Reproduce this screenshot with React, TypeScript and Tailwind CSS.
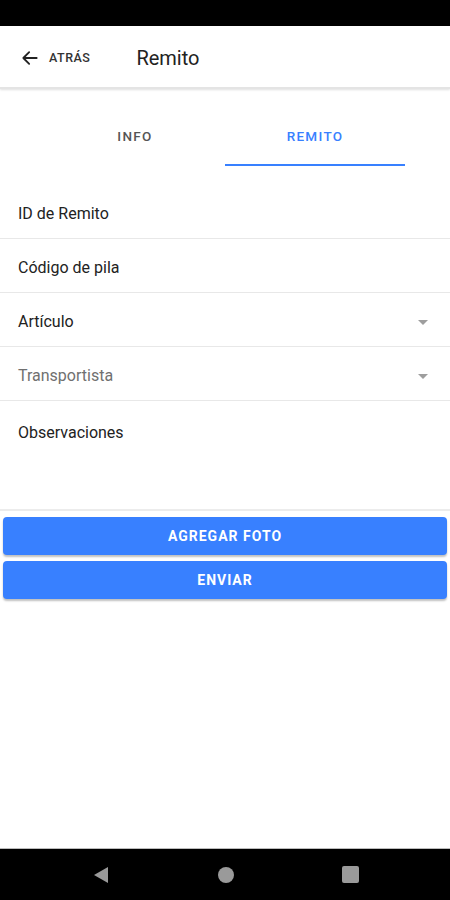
import React from 'react';

const font = { fontFamily: 'Roboto, "Noto Sans", sans-serif' };

function Field({ label, select, muted }: { label: string; select?: boolean; muted?: boolean }) {
  return (
    <div className="flex h-[54px] items-center justify-between border-b-[1.5px] border-[#e8e8e8] pl-[18px] pr-[22px] pt-[5px]">
      <span className={`text-[16px] ${muted ? 'text-[#707070]' : 'text-[#222]'}`}>{label}</span>
      {select && (
        <svg width="10" height="5" viewBox="0 0 10 5">
          <path d="M0 0 L10 0 L5 5 Z" fill="#9e9e9e" />
        </svg>
      )}
    </div>
  );
}

export default function App() {
  return (
    <div className="flex h-[900px] w-[450px] flex-col bg-white" style={font}>
      <div className="h-[26px] bg-black" />

      <div className="flex h-[63px] items-center border-b-2 border-[#e4e4e4] pt-[3px] shadow-[0_1px_2px_rgba(0,0,0,0.12)]">
        <div className="flex items-center pl-[20px]">
          <svg width="20" height="20" viewBox="0 0 24 24" fill="none" stroke="#222" strokeWidth="2.2" strokeLinecap="round" strokeLinejoin="round">
            <path d="M20 12H4M11 5l-7 7 7 7" />
          </svg>
          <span className="ml-[9px] text-[12.5px] font-medium tracking-[0.5px] text-[#333]">ATRÁS</span>
        </div>
        <span className="ml-[46px] text-[20px] text-[#222]">Remito</span>
      </div>

      <div className="mx-[45px] mt-[11px] flex h-[66px]">
        <div className="flex flex-1 items-center justify-center pt-[6px] text-[13.5px] font-medium tracking-[1.3px] text-[#555]">
          INFO
        </div>
        <div className="flex flex-1 flex-col">
          <div className="flex flex-1 items-center justify-center pt-[8px] text-[13.5px] font-medium tracking-[1.3px] text-[#3880ff]">
            REMITO
          </div>
          <div className="h-[2px] bg-[#3880ff]" />
        </div>
      </div>

      <div className="mt-[19px]">
        <Field label="ID de Remito" />
        <Field label="Código de pila" />
        <Field label="Artículo" select />
        <Field label="Transportista" select muted />
        <div className="h-[110px] border-b-2 border-[#ececec] pl-[18px] pt-[20px]">
          <span className="text-[16px] text-[#222]">Observaciones</span>
        </div>
      </div>

      <div className="mt-[6px] flex flex-col gap-[6px] px-[3px]">
        <button className="h-[38px] rounded-[4px] bg-[#3880ff] text-[14px] font-bold tracking-[1px] text-white shadow-[0_2px_2px_rgba(0,0,0,0.25)]">
          AGREGAR FOTO
        </button>
        <button className="h-[38px] rounded-[4px] bg-[#3880ff] text-[14px] font-bold tracking-[1px] text-white shadow-[0_2px_2px_rgba(0,0,0,0.25)]">
          ENVIAR
        </button>
      </div>

      <div className="flex-1" />

      <div className="flex h-[52px] items-center justify-center gap-[108px] border-t border-[#bbb] bg-black">
        <svg width="18" height="18" viewBox="0 0 18 18">
          <path d="M16 1 L16 17 L2 9 Z" fill="#9a9a9a" strokeLinejoin="round" />
        </svg>
        <div className="h-[16px] w-[16px] rounded-full bg-[#9a9a9a]" />
        <div className="h-[17px] w-[17px] rounded-[2px] bg-[#9a9a9a]" />
      </div>
    </div>
  );
}
